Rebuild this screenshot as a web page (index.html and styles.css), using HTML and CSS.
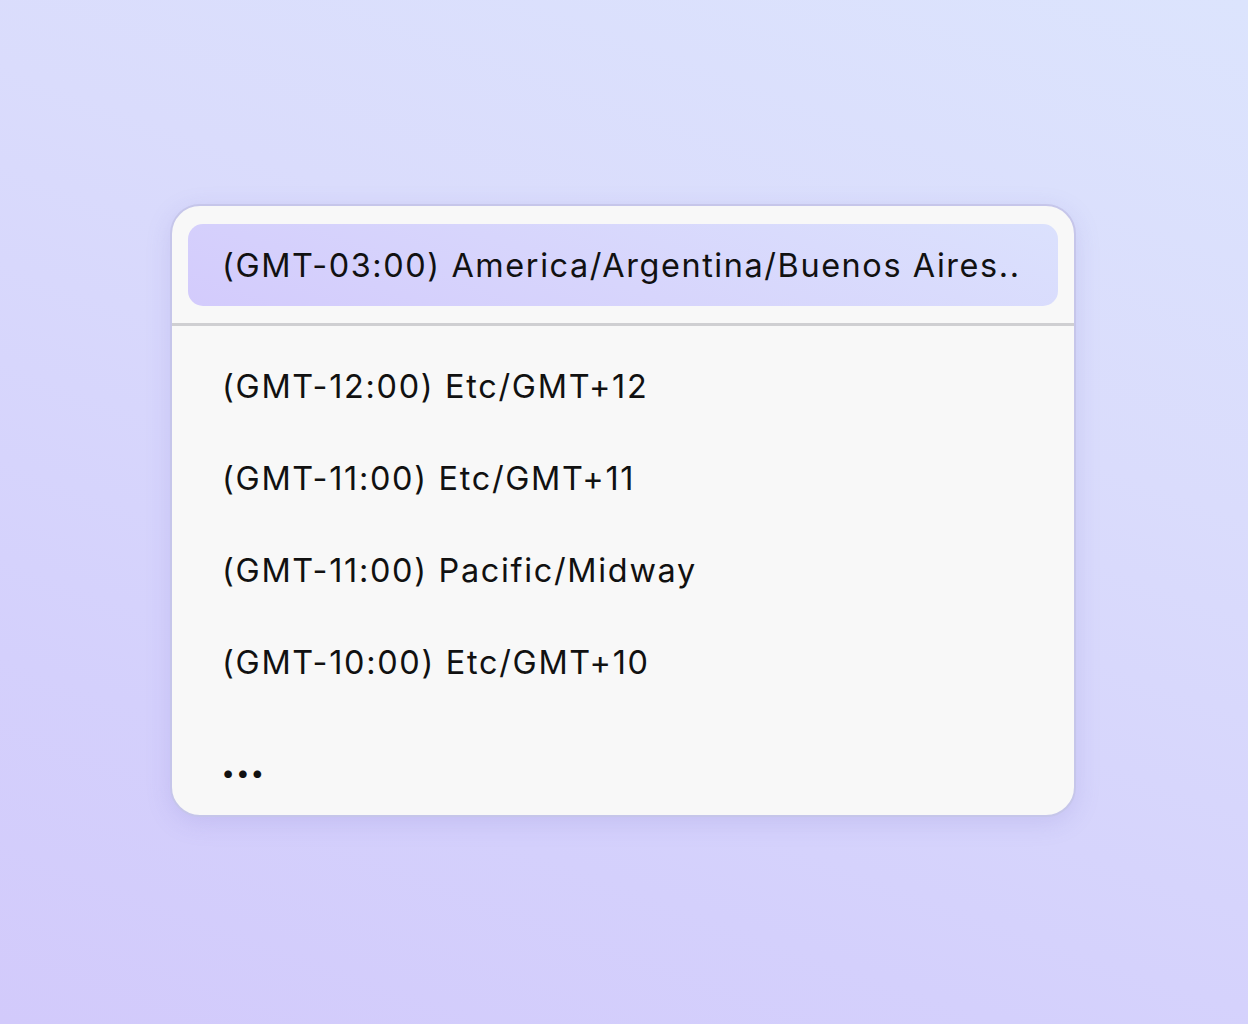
FILE: index.html
```html
<!DOCTYPE html>
<html>
<head>
<meta charset="utf-8">
<link rel="stylesheet" href="styles.css">
</head>
<body>
<div class="stage">
  <div class="card">
    <div class="selected-wrap">
      <div class="selected">(GMT-03:00) America/Argentina/Buenos Aires..</div>
    </div>
    <div class="divider"></div>
    <ul class="list">
      <li class="item">(GMT-12:00) Etc/GMT+12</li>
      <li class="item">(GMT-11:00) Etc/GMT+11</li>
      <li class="item">(GMT-11:00) Pacific/Midway</li>
      <li class="item">(GMT-10:00) Etc/GMT+10</li>
      <li class="more">...</li>
    </ul>
  </div>
</div>
</body>
</html>
```

FILE: styles.css
```css
html, body {
  margin: 0;
  padding: 0;
}
body {
  width: 1248px;
  height: 1024px;
  font-family: Inter, "Noto Sans", sans-serif;
  color: #111;
}
.stage {
  width: 1248px;
  height: 1024px;
  box-sizing: border-box;
  padding-top: 204px;
  padding-left: 170px;
  background: linear-gradient(200deg, #dce4fd 0%, #dadcfc 35%, #d4d0fc 75%, #d2cafb 100%);
}
.card {
  width: 906px;
  box-sizing: border-box;
  height: 613px;
  background: #f8f8f8;
  border: 2px solid #c6c6ea;
  border-radius: 30px;
  box-shadow: 0 6px 24px rgba(120, 110, 200, 0.18);
  overflow: hidden;
}
.selected-wrap {
  padding: 18px 16px 17px 16px;
}
.selected {
  height: 82px;
  border-radius: 15px;
  background: linear-gradient(20deg, #d3cbfc 0%, #d7d5fc 45%, #dbe1fd 100%);
  display: flex;
  align-items: center;
  padding-left: 34px;
  font-size: 32.4px;
  letter-spacing: 1.6px;
}
.divider {
  height: 3px;
  background: #cfcfd2;
}
.list {
  list-style: none;
  margin: 0;
  padding: 14px 0 0 0;
}
.item {
  height: 92px;
  display: flex;
  align-items: center;
  padding-left: 50px;
  font-size: 32.4px;
  letter-spacing: 1.7px;
}
.more {
  height: 128px;
  display: flex;
  align-items: center;
  padding-left: 49px;
  padding-bottom: 16px;
  box-sizing: border-box;
  font-size: 38px;
  font-weight: 900;
  letter-spacing: 0.5px;
  line-height: 1;
}
```
